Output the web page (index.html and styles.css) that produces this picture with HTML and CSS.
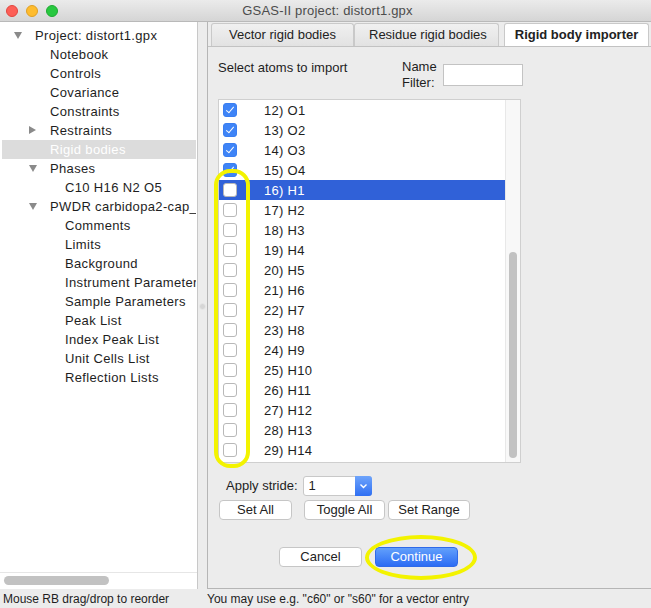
FILE: index.html
```html
<!DOCTYPE html>
<html>
<head>
<meta charset="utf-8">
<link rel="stylesheet" href="styles.css">
</head>
<body>
<div class="window">
  <div class="titlebar">
    <div class="lights">
      <span class="light red"></span>
      <span class="light yellow"></span>
      <span class="light green"></span>
    </div>
    <div class="title">GSAS-II project: distort1.gpx</div>
  </div>
  <div class="main">
    <div class="left">
      <div class="tree">
        <div class="node l0"><span class="tri down"></span>Project: distort1.gpx</div>
        <div class="node l1">Notebook</div>
        <div class="node l1">Controls</div>
        <div class="node l1">Covariance</div>
        <div class="node l1">Constraints</div>
        <div class="node l1"><span class="tri right"></span>Restraints</div>
        <div class="node l1 sel">Rigid bodies</div>
        <div class="node l1"><span class="tri down"></span>Phases</div>
        <div class="node l2">C10 H16 N2 O5</div>
        <div class="node l1"><span class="tri down"></span>PWDR carbidopa2-cap_c</div>
        <div class="node l2">Comments</div>
        <div class="node l2">Limits</div>
        <div class="node l2">Background</div>
        <div class="node l2">Instrument Parameters</div>
        <div class="node l2">Sample Parameters</div>
        <div class="node l2">Peak List</div>
        <div class="node l2">Index Peak List</div>
        <div class="node l2">Unit Cells List</div>
        <div class="node l2">Reflection Lists</div>
      </div>
      <div class="hscroll"><div class="hthumb"></div></div>
    </div>
    <div class="splitter"><span class="grip"></span></div>
    <div class="right">
      <div class="tabs">
        <div class="tab">Vector rigid bodies</div>
        <div class="tab">Residue rigid bodies</div>
        <div class="tab active">Rigid body importer</div>
      </div>
      <div class="panel">
        <div class="head">
          <div class="prompt">Select atoms to import</div>
          <div class="filter">
            <div class="flabel">Name<br>Filter:</div>
            <div class="finput"></div>
          </div>
        </div>
        <div class="listbox">
          <div class="rows">
            <div class="row"><span class="cb on"></span><span class="lbl">12) O1</span></div>
            <div class="row"><span class="cb on"></span><span class="lbl">13) O2</span></div>
            <div class="row"><span class="cb on"></span><span class="lbl">14) O3</span></div>
            <div class="row"><span class="cb on"></span><span class="lbl">15) O4</span></div>
            <div class="row hl"><span class="cb"></span><span class="lbl">16) H1</span></div>
            <div class="row"><span class="cb"></span><span class="lbl">17) H2</span></div>
            <div class="row"><span class="cb"></span><span class="lbl">18) H3</span></div>
            <div class="row"><span class="cb"></span><span class="lbl">19) H4</span></div>
            <div class="row"><span class="cb"></span><span class="lbl">20) H5</span></div>
            <div class="row"><span class="cb"></span><span class="lbl">21) H6</span></div>
            <div class="row"><span class="cb"></span><span class="lbl">22) H7</span></div>
            <div class="row"><span class="cb"></span><span class="lbl">23) H8</span></div>
            <div class="row"><span class="cb"></span><span class="lbl">24) H9</span></div>
            <div class="row"><span class="cb"></span><span class="lbl">25) H10</span></div>
            <div class="row"><span class="cb"></span><span class="lbl">26) H11</span></div>
            <div class="row"><span class="cb"></span><span class="lbl">27) H12</span></div>
            <div class="row"><span class="cb"></span><span class="lbl">28) H13</span></div>
            <div class="row"><span class="cb"></span><span class="lbl">29) H14</span></div>
          </div>
          <div class="vscroll"><div class="vthumb"></div></div>
          <div class="ring ring-cb"></div>
        </div>
        <div class="stride">
          <span>Apply stride:</span>
          <div class="combo"><span class="cval">1</span><span class="carrow"><svg width="9" height="6" viewBox="0 0 9 6"><path d="M1.5 1.5 L4.5 4.5 L7.5 1.5" fill="none" stroke="#fff" stroke-width="1.4"/></svg></span></div>
        </div>
        <div class="btnrow">
          <div class="btn wset">Set All</div>
          <div class="btn wtog">Toggle All</div>
          <div class="btn wrng">Set Range</div>
        </div>
        <div class="actions">
          <div class="btn wact">Cancel</div>
          <div class="btn primary wact">Continue<div class="ring ring-go"></div></div>
        </div>
      </div>
    </div>
  </div>
  <div class="status">
    <div class="s1">Mouse RB drag/drop to reorder</div>
    <div class="s2">You may use e.g. "c60" or "s60" for a vector entry</div>
  </div>
</div>
</body>
</html>
```

FILE: styles.css
```css
* { box-sizing: border-box; }
html, body { margin: 0; padding: 0; }
body {
  width: 651px;
  height: 608px;
  overflow: hidden;
  font-family: "Liberation Sans", Arial, sans-serif;
  font-size: 13px;
  color: #1e1e1e;
  background: #ececec;
}
.window { width: 651px; height: 608px; display: flex; flex-direction: column; }

.titlebar {
  height: 22px;
  flex: none;
  position: relative;
  display: flex;
  align-items: center;
  justify-content: center;
  background: linear-gradient(#ebebeb, #d5d5d5);
  border-bottom: 1px solid #b9b9b9;
}
.lights { position: absolute; left: 6px; top: 5px; display: flex; gap: 8px; }
.light { width: 12px; height: 12px; border-radius: 50%; display: block; }
.red { background: #fd5f57; border: 1px solid #e2463f; }
.yellow { background: #febc2e; border: 1px solid #e0a023; }
.green { background: #28c840; border: 1px solid #1eaa31; }
.title { color: #4c4c4c; font-size: 13px; padding-left: 4px; letter-spacing: 0.2px; }

.main { flex: 1; display: flex; min-height: 0; }

.left {
  width: 198px;
  flex: none;
  background: #fff;
  border-right: 1px solid #c8c8c8;
  display: flex;
  flex-direction: column;
}
.tree { flex: 1; padding-top: 4px; overflow: hidden; letter-spacing: 0.35px; }
.node {
  height: 19px;
  line-height: 19px;
  white-space: nowrap;
  overflow: hidden;
  position: relative;
  margin: 0 1px 0 2px;
}
.l0 { padding-left: 33px; }
.l1 { padding-left: 48px; }
.l2 { padding-left: 63px; }
.sel { background: #dcdcdc; color: #fff; }
.tri {
  position: absolute;
  top: 6px;
  width: 0; height: 0;
  border-style: solid;
}
.l0 .tri { left: 12px; }
.l1 .tri { left: 27px; }
.tri.down { border-width: 7px 4px 0 4px; border-color: #8a8a8a transparent transparent transparent; top: 6px; }
.tri.right { border-width: 4px 0 4px 7px; border-color: transparent transparent transparent #8a8a8a; top: 5px; }

.hscroll {
  height: 17px;
  flex: none;
  border-top: 1px solid #e6e6e6;
  padding: 3px 4px;
}
.hthumb { width: 105px; height: 9px; border-radius: 5px; background: #c2c2c2; }

.splitter {
  width: 9px;
  flex: none;
  background: #ececec;
  display: flex;
  align-items: center;
  justify-content: center;
  padding-top: 2px;
}
.grip { width: 7px; height: 7px; border-radius: 50%; background: #d6d6d6; border: 1px solid #e8e8e8; display: block; }

.right {
  flex: 1;
  display: flex;
  flex-direction: column;
  border-left: 1px solid #b5b5b5;
  border-bottom: 1px solid #b5b5b5;
  min-width: 0;
}
.tabs { display: flex; padding: 2px 0 0 3px; height: 25px; flex: none; border-bottom: 1px solid #c2c2c2; align-items: flex-end; }
.tab {
  height: 23px;
  line-height: 22px;
  padding: 0 14px;
  background: linear-gradient(#f0f0f0, #e2e2e2);
  border: 1px solid #c9c9c9;
  border-bottom: none;
  border-radius: 3px 3px 0 0;
  color: #222;
  white-space: nowrap;
  text-align: center;
}
.tab:nth-child(1) { width: 143px; }
.tab:nth-child(2) { width: 145px; }
.tab.active {
  width: 145px;
  margin-left: 5px;
  background: #fff;
  font-weight: bold;
  padding: 0 4px;
}

.panel { flex: 1; display: flex; flex-direction: column; padding: 10px 0 0 10px; }
.head { display: flex; height: 42px; }
.prompt { width: 184px; padding-top: 3px; }
.filter { display: flex; gap: 6px; }
.flabel { line-height: 16px; padding-top: 2px; }
.finput { width: 80px; height: 22px; background: #fff; border: 1px solid #c3c3c3; margin-top: 7px; }

.listbox {
  width: 303px;
  height: 364px;
  background: #fff;
  border: 1px solid #cfcfcf;
  display: flex;
  position: relative;
}
.rows { flex: 1; }
.row { height: 20px; display: flex; align-items: center; padding-left: 4px; }
.row.hl { background: #3061d8; color: #fff; }
.cb {
  width: 14px; height: 14px;
  border-radius: 3px;
  background: #fff;
  border: 1px solid #b8b8b8;
  flex: none;
  position: relative;
}
.cb.on { background: #3e84f7; border-color: #3a7ef0; }
.cb.on::after {
  content: "";
  position: absolute;
  left: 4px; top: 1px;
  width: 3px; height: 7px;
  border: solid #fff;
  border-width: 0 1.6px 1.6px 0;
  transform: rotate(40deg);
}
.lbl { margin-left: 27px; letter-spacing: 0.3px; }
.vscroll { width: 15px; flex: none; background: #f8f8f8; border-left: 1px solid #e8e8e8; padding: 152px 0 4px 3px; }
.vthumb { width: 8px; height: 100%; border-radius: 4px; background: #c2c2c2; }

.ring { position: absolute; border: 4px solid #f3f300; pointer-events: none; }
.ring-cb { left: -5px; top: 69px; width: 36px; height: 299px; border-radius: 16px; }
.ring-go { left: -11px; top: -13px; width: 112px; height: 45px; border-radius: 50%; }

.stride { display: flex; align-items: center; margin: 12px 0 0 8px; gap: 4px; height: 21px; }
.combo { display: flex; width: 69px; height: 20px; background: #fff; border: 1px solid #c8c8c8; border-radius: 3px; margin-left: 1px; }
.cval { flex: 1; padding-left: 5px; line-height: 18px; }
.carrow {
  width: 17px;
  background: linear-gradient(#6ea4fb, #2f6ff3);
  border-radius: 0 3px 3px 0;
  display: flex; align-items: center; justify-content: center;
  margin: -1px -1px -1px 0;
}
.btnrow { display: flex; gap: 3px; margin: 4px 0 0 1px; }
.btn {
  height: 20px;
  line-height: 18px;
  text-align: center;
  background: #fff;
  border: 1px solid #c6c6c6;
  border-radius: 4px;
  color: #222;
  position: relative;
}
.wset { width: 73px; margin-right: 9px; }
.wtog { width: 81px; }
.wrng { width: 82px; }
.wact { width: 83px; }
.actions { display: flex; gap: 13px; margin: 27px 0 0 61px; }
.btn.primary {
  background: linear-gradient(#62a0fb, #2c6cf4);
  border-color: #2f6ae8;
  color: #fff;
}

.status { height: 19px; flex: none; display: flex; font-size: 12px; line-height: 20px; background: #ececec; }
.s1 { width: 207px; padding-left: 3px; white-space: nowrap; }
.s2 { white-space: nowrap; }
```
